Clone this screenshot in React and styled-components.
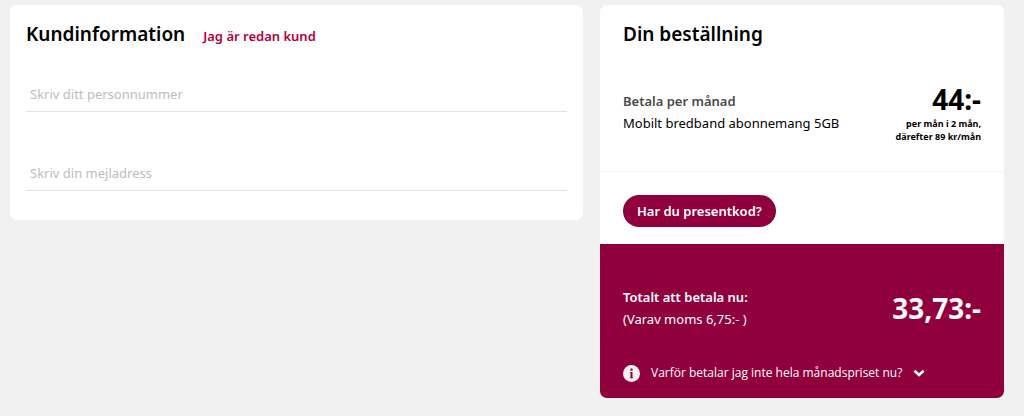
import React, { useState } from 'react'
import styled, { createGlobalStyle } from 'styled-components'

export default function App() {
  const [personNumber, setPersonNumber] = useState('')
  const [email, setEmail] = useState('')

  return (
    <>
      <GlobalStyle />
      <Page>
        <CustomerCard>
          <CustomerHeader>
            <Title>Kundinformation</Title>
            <LoginLink href="#login">Jag är redan kund</LoginLink>
          </CustomerHeader>
          <Field
            type="text"
            aria-label="Personnummer"
            placeholder="Skriv ditt personnummer"
            value={personNumber}
            onChange={event => setPersonNumber(event.target.value)}
          />
          <Field
            type="email"
            aria-label="Mejladress"
            placeholder="Skriv din mejladress"
            value={email}
            onChange={event => setEmail(event.target.value)}
          />
        </CustomerCard>

        <Card>
          <OrderDetails>
            <Title>Din beställning</Title>
            <OrderRow>
              <div>
                <RowLabel $muted>Betala per månad</RowLabel>
                <RowText>Mobilt bredband abonnemang 5GB</RowText>
              </div>
              <PriceColumn>
                <Price>44:-</Price>
                <PriceNote>
                  per mån i 2 mån,<br />
                  därefter 89 kr/mån
                </PriceNote>
              </PriceColumn>
            </OrderRow>
          </OrderDetails>
          <GiftCode>
            <GiftButton type="button">Har du presentkod?</GiftButton>
          </GiftCode>
          <Total>
            <Row>
              <div>
                <RowLabel>Totalt att betala nu:</RowLabel>
                <RowText>(Varav moms 6,75:- )</RowText>
              </div>
              <Price>33,73:-</Price>
            </Row>
            <InfoButton type="button">
              <InfoIcon />
              <span>Varför betalar jag inte hela månadspriset nu?</span>
              <ChevronIcon />
            </InfoButton>
          </Total>
        </Card>
      </Page>
    </>
  )
}

function InfoIcon() {
  return (
    <svg width="17" height="17" viewBox="0 0 17 17" aria-hidden="true">
      <circle cx="8.5" cy="8.5" r="8.5" fill="#f2f0f1" />
      <rect x="7.4" y="3.6" width="2.2" height="2.1" rx="0.5" fill="#90003c" />
      <path d="M6.9 7h2.6v5.5h.6v.7H6.9v-.7h.6V7.7h-.6z" fill="#90003c" />
    </svg>
  )
}

function ChevronIcon() {
  return (
    <svg width="12" height="8" viewBox="0 0 12 8" aria-hidden="true">
      <path d="M1.4 1.8 6 5.9l4.6-4.1" fill="none" stroke="#fff" strokeWidth="2.6" />
    </svg>
  )
}

const GlobalStyle = createGlobalStyle`
  body {
    margin: 0;
    background-color: #f1f1f1;
    color: #000;
    font-family: "Noto Sans", "Open Sans", sans-serif;
  }

  * {
    box-sizing: border-box;
  }
`

const Page = styled.main`
  display: grid;
  grid-template-columns: minmax(0, 1fr) 404px;
  align-items: start;
  gap: 17px;
  padding: 5px 20px 18px 10px;
`

const Card = styled.section`
  background-color: #fff;
  border-radius: 7px;
  overflow: hidden;
`

const CustomerCard = styled(Card)`
  display: flex;
  flex-direction: column;
  gap: 45px;
  padding: 15px 16px 29px;
`

const CustomerHeader = styled.header`
  display: flex;
  align-items: baseline;
  gap: 18px;
  margin-bottom: -15px;
`

const Title = styled.h1`
  margin: 0;
  font-size: 19px;
  font-weight: 600;
  line-height: 28px;
`

const LoginLink = styled.a`
  color: #b4003c;
  font-size: 13px;
  font-weight: 600;
  text-decoration: none;
`

const Field = styled.input`
  width: 100%;
  height: 34px;
  padding: 0 4px 2px;
  border: 0;
  border-bottom: 1px solid #e2e2e2;
  background: transparent;
  font-family: inherit;
  font-size: 13px;

  &::placeholder {
    color: #bdbdbd;
    opacity: 1;
  }
`

const OrderDetails = styled.div`
  padding: 15px 23px 28px;
  border-bottom: 1px solid #f3f3f3;
`

const Row = styled.div`
  display: flex;
  align-items: center;
  justify-content: space-between;
`

const OrderRow = styled(Row)`
  padding-top: 33px;
`

const RowLabel = styled.div`
  color: ${props => props.$muted ? '#4a4a4a' : 'inherit'};
  font-size: 13px;
  font-weight: 600;
  line-height: 22px;
`

const RowText = styled.div`
  font-size: 13px;
  line-height: 22px;
`

const PriceColumn = styled.div`
  text-align: right;
`

const Price = styled.div`
  font-size: 28px;
  font-weight: 700;
  line-height: 36px;
`

const PriceNote = styled.div`
  font-size: 9px;
  font-weight: 700;
  line-height: 13px;
`

const GiftCode = styled.div`
  padding: 23px 23px 17px;
`

const GiftButton = styled.button`
  display: block;
  height: 32px;
  padding: 0 14px;
  border: 0;
  border-radius: 16px;
  background-color: #90003c;
  color: #fff;
  font-family: inherit;
  font-size: 13px;
  font-weight: 600;
  cursor: pointer;
`

const Total = styled.div`
  padding: 42px 23px 14px;
  background-color: #90003c;
  color: #fff;
`

const InfoButton = styled.button`
  display: flex;
  align-items: center;
  gap: 11px;
  margin-top: 32px;
  padding: 0;
  border: 0;
  background: transparent;
  color: inherit;
  font-family: "Open Sans", "Noto Sans", sans-serif;
  font-size: 12px;
  line-height: 22px;
  cursor: pointer;
`
